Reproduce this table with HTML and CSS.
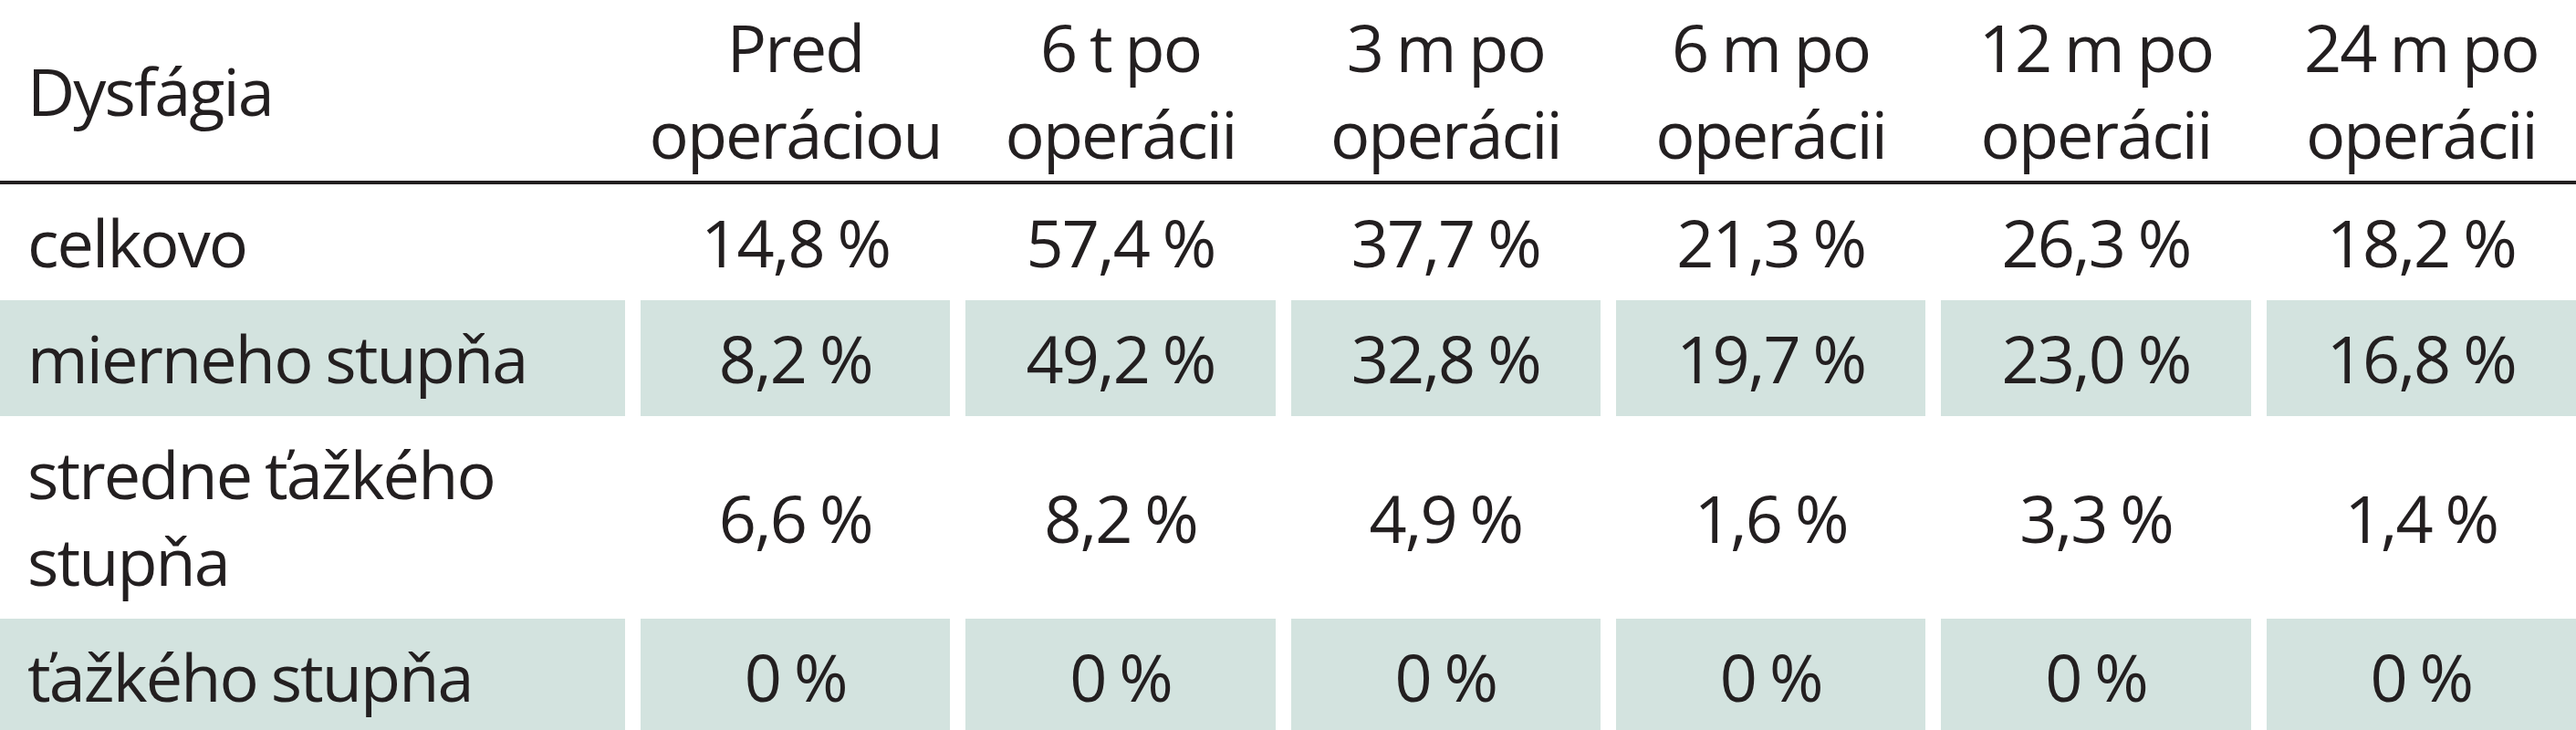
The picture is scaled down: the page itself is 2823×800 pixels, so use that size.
FILE: index.html
```html
<!DOCTYPE html>
<html lang="sk">
<head>
<meta charset="utf-8">
<title>Dysfágia</title>
<link rel="stylesheet" href="styles.css">
</head>
<body>
<div class="table">
  <div class="row head">
    <div class="cell label">Dysfágia</div>
    <div class="cell">Pred operáciou</div>
    <div class="cell">6 t po operácii</div>
    <div class="cell">3 m po operácii</div>
    <div class="cell">6 m po operácii</div>
    <div class="cell">12 m po operácii</div>
    <div class="cell">24 m po operácii</div>
  </div>
  <div class="row">
    <div class="cell label">celkovo</div>
    <div class="cell">14,8 %</div>
    <div class="cell">57,4 %</div>
    <div class="cell">37,7 %</div>
    <div class="cell">21,3 %</div>
    <div class="cell">26,3 %</div>
    <div class="cell">18,2 %</div>
  </div>
  <div class="row shade">
    <div class="cell label">mierneho stupňa</div>
    <div class="cell">8,2 %</div>
    <div class="cell">49,2 %</div>
    <div class="cell">32,8 %</div>
    <div class="cell">19,7 %</div>
    <div class="cell">23,0 %</div>
    <div class="cell">16,8 %</div>
  </div>
  <div class="row">
    <div class="cell label">stredne ťažkého stupňa</div>
    <div class="cell">6,6 %</div>
    <div class="cell">8,2 %</div>
    <div class="cell">4,9 %</div>
    <div class="cell">1,6 %</div>
    <div class="cell">3,3 %</div>
    <div class="cell">1,4 %</div>
  </div>
  <div class="row shade">
    <div class="cell label">ťažkého stupňa</div>
    <div class="cell">0 %</div>
    <div class="cell">0 %</div>
    <div class="cell">0 %</div>
    <div class="cell">0 %</div>
    <div class="cell">0 %</div>
    <div class="cell">0 %</div>
  </div>
</div>
</body>
</html>
```

FILE: styles.css
```css
html, body {
  margin: 0;
  padding: 0;
  background: #ffffff;
}

.table {
  width: 2823px;
  font-family: "Open Sans", "Noto Sans", sans-serif;
  font-size: 72px;
  font-weight: 370;
  letter-spacing: -1.9px;
  word-spacing: -2px;
  line-height: 95px;
  color: #231f20;
}

.row {
  display: grid;
  grid-template-columns: 685px repeat(6, 1fr);
  column-gap: 17px;
}

.cell {
  display: flex;
  align-items: center;
  justify-content: center;
  text-align: center;
  padding: 16px 0;
}

.cell.label {
  justify-content: flex-start;
  text-align: left;
  padding-left: 30px;
  padding-right: 20px;
}

.head {
  border-bottom: 4px solid #231f20;
}

.head .cell {
  padding-top: 4px;
  padding-bottom: 4px;
}

.shade .cell {
  background: #d3e3df;
}
```
